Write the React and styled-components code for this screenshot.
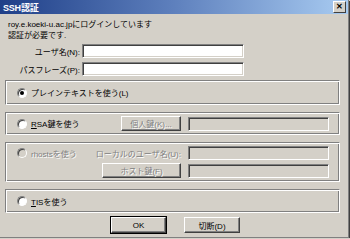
import React from "react";
import styled, { createGlobalStyle, css } from "styled-components";

const GlobalStyle = createGlobalStyle`
  html, body {
    margin: 0;
    padding: 0;
    background: #d4d0c8;
  }
  body {
    font-family: "Liberation Sans", "Noto Sans CJK JP", sans-serif;
    font-size: 8px;
    color: #000;
  }
`;

const Window = styled.div`
  width: 348px;
  height: 237px;
  background: #d4d0c8;
  border-right: 1px solid #808080;
  border-bottom: 1px solid #808080;
  box-shadow: 1px 1px 0 #404040;
  display: flex;
  flex-direction: column;
  overflow: hidden;
`;

const TitleBar = styled.div`
  height: 14px;
  display: flex;
  align-items: center;
  justify-content: space-between;
  padding: 0 2px 0 3px;
  background: linear-gradient(to right, #1f3f88, #5e80bd 50%, #a8cbf1);
`;

const Title = styled.span`
  color: #fff;
  font-weight: bold;
  font-size: 9px;
  letter-spacing: -0.2px;
`;

const CloseButton = styled.div`
  width: 11px;
  height: 10px;
  background: #d4d0c8;
  border: 1px solid;
  border-color: #fff #404040 #404040 #fff;
  display: flex;
  align-items: center;
  justify-content: center;
  font-size: 8px;
  font-weight: bold;
  line-height: 1;
`;

const Body = styled.div`
  display: flex;
  flex-direction: column;
  padding: 5px 0 0 8px;
`;

const Message = styled.div`
  line-height: 11px;
`;

const FieldRow = styled.div`
  display: flex;
  align-items: center;
  margin-top: ${(p) => p.$top}px;
`;

const FieldLabel = styled.label`
  width: 72px;
  text-align: right;
  padding-right: 2px;
`;

const TextBox = styled.div`
  box-sizing: border-box;
  width: ${(p) => p.$width}px;
  height: 14px;
  border: 1px solid;
  border-color: #808080 #fff #fff #808080;
  box-shadow: inset 1px 1px 0 #404040, inset -1px -1px 0 #d4d0c8;
  background: ${(p) => (p.$disabled ? "#d4d0c8" : "#fff")};
`;

const Groups = styled.div`
  display: flex;
  flex-direction: column;
  gap: 7px;
  margin: 4px 0 0 -3px;
  width: 335px;
`;

const Group = styled.div`
  box-sizing: border-box;
  height: ${(p) => p.$height}px;
  border: 1px solid;
  border-color: #808080 #fff #fff #808080;
  box-shadow: inset 1px 1px 0 #fff, inset -1px -1px 0 #808080;
  display: grid;
  grid-template-columns: 1fr auto 141px;
  column-gap: 7px;
  row-gap: 3px;
  align-content: center;
  align-items: center;
  padding: 0 10px 0 11px;
`;

const RadioOption = styled.div`
  display: flex;
  align-items: center;
  gap: 4px;
  grid-column: 1;
  ${(p) =>
    p.$disabled &&
    css`
      color: #808080;
      text-shadow: 1px 1px 0 #fff;
    `}
`;

const RadioCircle = styled.span`
  box-sizing: border-box;
  width: 10px;
  height: 10px;
  border-radius: 50%;
  border: 1px solid;
  border-color: #808080 #fff #fff #808080;
  box-shadow: inset 1px 1px 0 #404040;
  background: ${(p) => (p.$disabled ? "#d4d0c8" : "#fff")};
  display: flex;
  align-items: center;
  justify-content: center;
  &::after {
    content: "";
    width: 4px;
    height: 4px;
    border-radius: 50%;
    background: #000;
    display: ${(p) => (p.$checked ? "block" : "none")};
  }
`;

const Key = styled.span`
  text-decoration: underline;
`;

const SideLabel = styled.span`
  grid-column: 2;
  text-align: right;
  color: #808080;
  text-shadow: 1px 1px 0 #fff;
`;

const PushButton = styled.div`
  box-sizing: border-box;
  width: ${(p) => p.$width}px;
  height: ${(p) => p.$height || 15}px;
  display: flex;
  align-items: center;
  justify-content: center;
  background: #d4d0c8;
  border: 1px solid;
  border-color: #fff #404040 #404040 #fff;
  box-shadow: inset -1px -1px 0 #808080;
  ${(p) =>
    p.$disabled &&
    css`
      color: #808080;
      text-shadow: 1px 1px 0 #fff;
    `}
  ${(p) =>
    p.$default &&
    css`
      outline: 1px solid #000;
    `}
`;

const GroupButton = styled(PushButton)`
  grid-column: 2;
  justify-self: end;
`;

const GroupInput = styled(TextBox)`
  grid-column: 3;
`;

const ButtonRow = styled.div`
  display: flex;
  gap: 18px;
  margin: 4px 0 0 103px;
`;

export default function App() {
  return (
    <>
      <GlobalStyle />
      <Window>
        <TitleBar>
          <Title>SSH認証</Title>
          <CloseButton>✕</CloseButton>
        </TitleBar>
        <Body>
          <Message>
            roy.e.koeki-u.ac.jpにログインしています
            <br />
            認証が必要です.
          </Message>
          <FieldRow $top={3}>
            <FieldLabel>ユーザ名(N):</FieldLabel>
            <TextBox $width={162} />
          </FieldRow>
          <FieldRow $top={4}>
            <FieldLabel>パスフレーズ(P):</FieldLabel>
            <TextBox $width={162} />
          </FieldRow>
          <Groups>
            <Group $height={25}>
              <RadioOption>
                <RadioCircle $checked />
                プレインテキストを使う(L)
              </RadioOption>
            </Group>
            <Group $height={23}>
              <RadioOption>
                <RadioCircle />
                <span>
                  <Key>R</Key>SA鍵を使う
                </span>
              </RadioOption>
              <GroupButton $width={60} $disabled>
                個人鍵(K)...
              </GroupButton>
              <GroupInput $width={141} $disabled />
            </Group>
            <Group $height={40}>
              <RadioOption $disabled>
                <RadioCircle $disabled />
                rhostsを使う
              </RadioOption>
              <SideLabel>ローカルのユーザ名(U):</SideLabel>
              <GroupInput $width={141} $disabled />
              <GroupButton $width={79} $disabled>
                ホスト鍵(F)
              </GroupButton>
              <GroupInput $width={141} $disabled />
            </Group>
            <Group $height={24}>
              <RadioOption>
                <RadioCircle />
                <span>
                  <Key>T</Key>ISを使う
                </span>
              </RadioOption>
            </Group>
          </Groups>
          <ButtonRow>
            <PushButton $width={55} $height={16} $default>
              OK
            </PushButton>
            <PushButton $width={56} $height={16}>
              切断(D)
            </PushButton>
          </ButtonRow>
        </Body>
      </Window>
    </>
  );
}
